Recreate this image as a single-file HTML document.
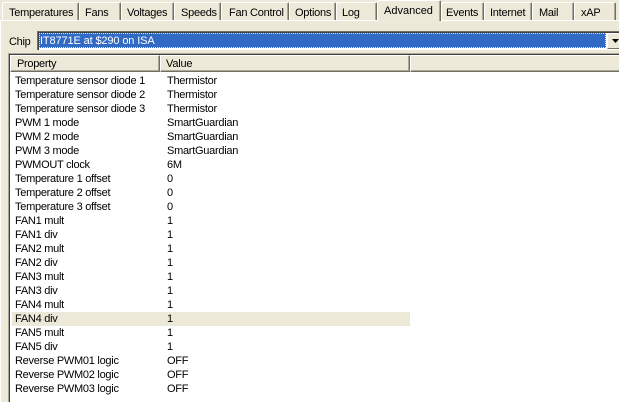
<!DOCTYPE html>
<html>
<head>
<meta charset="utf-8">
<style>
html,body{margin:0;padding:0;width:619px;height:402px;overflow:hidden;background:#ece9d8;}
body{position:relative;font-family:"Liberation Sans",sans-serif;font-size:11px;color:#000;}
.a{position:absolute;white-space:nowrap;}
.tab{position:absolute;top:2px;height:18px;box-sizing:border-box;border-top:1px solid #fff;border-left:1px solid #fff;border-right:1px solid #716f64;box-shadow:inset -1px 0 0 #aca899;line-height:18px;background:#ece9d8;border-top-left-radius:2px;border-top-right-radius:2px;}
.tab span{position:absolute;left:6px;top:1px;white-space:nowrap;letter-spacing:-0.25px;}
.row{position:absolute;height:14px;line-height:14px;white-space:nowrap;margin-top:1px;letter-spacing:-0.27px;}
</style>
</head>
<body>
<div class="a" style="left:0;top:20px;width:619px;height:1px;background:#fff"></div>
<div class="a" style="left:0;top:20px;width:1px;height:382px;background:#fff"></div>

<div class="tab" style="left:2px;width:77px"><span>Temperatures</span></div>
<div class="tab" style="left:79px;width:42px"><span style="left:5px">Fans</span></div>
<div class="tab" style="left:121px;width:53px"><span style="left:5px">Voltages</span></div>
<div class="tab" style="left:174px;width:47px"><span>Speeds</span></div>
<div class="tab" style="left:221px;width:68px"><span style="left:7px">Fan Control</span></div>
<div class="tab" style="left:289px;width:47px"><span style="left:5px">Options</span></div>
<div class="tab" style="left:336px;width:41px"><span style="left:5px">Log</span></div>
<div class="tab" style="left:377px;width:64px;top:0;height:21px"><span style="left:6px;top:1px;letter-spacing:0">Advanced</span></div>
<div class="tab" style="left:441px;width:43px"><span style="left:4px">Events</span></div>
<div class="tab" style="left:484px;width:48px"><span style="left:5px">Internet</span></div>
<div class="tab" style="left:532px;width:42px"><span>Mail</span></div>
<div class="tab" style="left:574px;width:42px"><span>xAP</span></div>

<div class="a" style="left:9px;top:35px;line-height:14px;letter-spacing:-0.3px">Chip</div>
<div class="a" style="left:37px;top:31px;width:582px;height:19px;box-sizing:border-box;background:#fff;border-top:1px solid #716f64;border-left:1px solid #716f64;box-shadow:inset 1px 1px 0 #404040"></div>
<div class="a" style="left:39px;top:33px;width:567px;height:15px;box-sizing:border-box;background:#316ac5;border:1px dotted #ece9d8;color:#fff;line-height:15px;letter-spacing:-0.13px"><span>IT8771E at $290 on ISA</span></div>
<div class="a" style="left:607px;top:33px;width:12px;height:16px;background:#ece9d8;border-top:1px solid #fff;border-left:1px solid #fff;border-bottom:1px solid #716f64;box-sizing:border-box"></div>
<svg class="a" style="left:612px;top:39px" width="7" height="5"><path d="M0 0H7L3.5 4Z" fill="#000"/></svg>

<div class="a" style="left:8px;top:53px;width:611px;height:349px;box-sizing:border-box;background:#fff;border-left:1px solid #aca899;border-top:1px solid #aca899;"></div>
<div class="a" style="left:9px;top:54px;width:610px;height:348px;box-sizing:border-box;background:#fff;border-left:1px solid #404040;border-top:1px solid #404040;"></div>

<div class="a" style="left:10px;top:55px;width:150px;height:17px;box-sizing:border-box;background:#ece9d8;border-top:1px solid #fff;border-left:1px solid #fff;border-right:1px solid #716f64;border-bottom:1px solid #716f64;box-shadow:inset -1px -1px 0 #aca899;line-height:17px;padding-left:6px;letter-spacing:-0.3px">Property</div>
<div class="a" style="left:160px;top:55px;width:250px;height:17px;box-sizing:border-box;background:#ece9d8;border-top:1px solid #fff;border-left:1px solid #fff;border-right:1px solid #716f64;border-bottom:1px solid #716f64;box-shadow:inset -1px -1px 0 #aca899;line-height:17px;padding-left:5px;letter-spacing:-0.2px">Value</div>
<div class="a" style="left:410px;top:55px;width:209px;height:17px;box-sizing:border-box;background:#ece9d8;border-top:1px solid #fff;border-left:1px solid #fff;border-bottom:1px solid #716f64;box-shadow:inset 0 -1px 0 #aca899"></div>

<div class="a" style="left:12px;top:312px;width:398px;height:14px;background:#ece9d8"></div>

<div class="row" style="left:15px;top:73px">Temperature sensor diode 1</div><div class="row" style="left:167px;top:73px">Thermistor</div>
<div class="row" style="left:15px;top:87px">Temperature sensor diode 2</div><div class="row" style="left:167px;top:87px">Thermistor</div>
<div class="row" style="left:15px;top:101px">Temperature sensor diode 3</div><div class="row" style="left:167px;top:101px">Thermistor</div>
<div class="row" style="left:15px;top:115px">PWM 1 mode</div><div class="row" style="left:167px;top:115px">SmartGuardian</div>
<div class="row" style="left:15px;top:129px">PWM 2 mode</div><div class="row" style="left:167px;top:129px">SmartGuardian</div>
<div class="row" style="left:15px;top:143px">PWM 3 mode</div><div class="row" style="left:167px;top:143px">SmartGuardian</div>
<div class="row" style="left:15px;top:157px">PWMOUT clock</div><div class="row" style="left:167px;top:157px">6M</div>
<div class="row" style="left:15px;top:171px">Temperature 1 offset</div><div class="row" style="left:167px;top:171px">0</div>
<div class="row" style="left:15px;top:185px">Temperature 2 offset</div><div class="row" style="left:167px;top:185px">0</div>
<div class="row" style="left:15px;top:199px">Temperature 3 offset</div><div class="row" style="left:167px;top:199px">0</div>
<div class="row" style="left:15px;top:213px">FAN1 mult</div><div class="row" style="left:167px;top:213px">1</div>
<div class="row" style="left:15px;top:227px">FAN1 div</div><div class="row" style="left:167px;top:227px">1</div>
<div class="row" style="left:15px;top:241px">FAN2 mult</div><div class="row" style="left:167px;top:241px">1</div>
<div class="row" style="left:15px;top:255px">FAN2 div</div><div class="row" style="left:167px;top:255px">1</div>
<div class="row" style="left:15px;top:269px">FAN3 mult</div><div class="row" style="left:167px;top:269px">1</div>
<div class="row" style="left:15px;top:283px">FAN3 div</div><div class="row" style="left:167px;top:283px">1</div>
<div class="row" style="left:15px;top:297px">FAN4 mult</div><div class="row" style="left:167px;top:297px">1</div>
<div class="row" style="left:15px;top:311px">FAN4 div</div><div class="row" style="left:167px;top:311px">1</div>
<div class="row" style="left:15px;top:325px">FAN5 mult</div><div class="row" style="left:167px;top:325px">1</div>
<div class="row" style="left:15px;top:339px">FAN5 div</div><div class="row" style="left:167px;top:339px">1</div>
<div class="row" style="left:15px;top:353px">Reverse PWM01 logic</div><div class="row" style="left:167px;top:353px">OFF</div>
<div class="row" style="left:15px;top:367px">Reverse PWM02 logic</div><div class="row" style="left:167px;top:367px">OFF</div>
<div class="row" style="left:15px;top:381px">Reverse PWM03 logic</div><div class="row" style="left:167px;top:381px">OFF</div>
</body>
</html>
